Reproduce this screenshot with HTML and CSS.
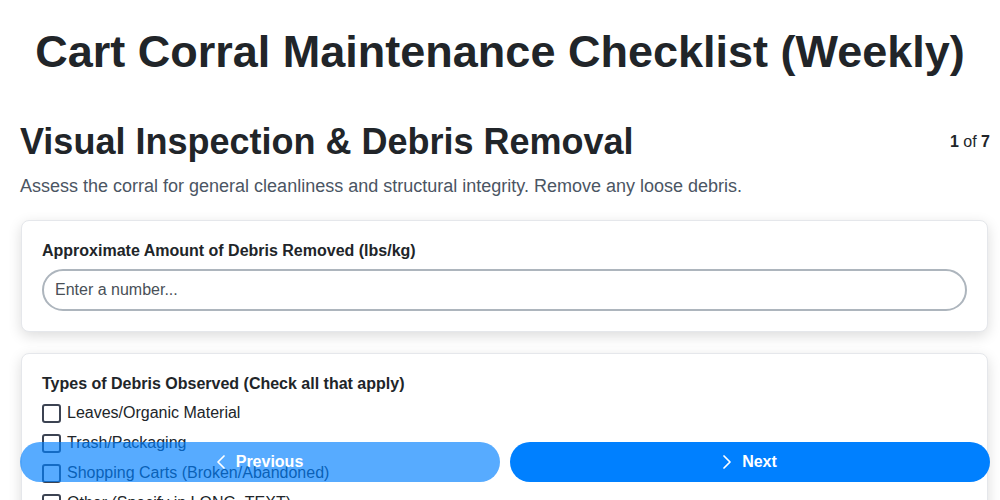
FILE: index.html
```html
<!DOCTYPE html>
<html lang="en">
<head>
  <meta charset="UTF-8">
  <title>Cart Corral Maintenance Checklist (Weekly)</title>
  <link rel="stylesheet" href="styles.css">
</head>
<body>

<h1 class="page-title">Cart Corral Maintenance Checklist (Weekly)</h1>

<div class="page">
  <div class="step-head">
    <h2>Visual Inspection &amp; Debris Removal</h2>
    <span class="step-count"><b>1</b> of <b>7</b></span>
  </div>
  <p class="step-desc">Assess the corral for general cleanliness and structural integrity. Remove any loose debris.</p>

  <!-- Question 1 -->
  <div class="card">
    <label class="q-label" for="debrisAmount">Approximate Amount of Debris Removed (lbs/kg)</label>
    <input type="number" id="debrisAmount" class="text-input" placeholder="Enter a number...">
  </div>

  <!-- Question 2 -->
  <div class="card">
    <div class="q-label tight">Types of Debris Observed (Check all that apply)</div>
    <label class="check-row"><input type="checkbox"><span>Leaves/Organic Material</span></label>
    <label class="check-row"><input type="checkbox"><span>Trash/Packaging</span></label>
    <label class="check-row"><input type="checkbox"><span>Shopping Carts (Broken/Abandoned)</span></label>
    <label class="check-row"><input type="checkbox"><span>Other (Specify in LONG_TEXT)</span></label>
  </div>
</div>

<div class="nav-bar">
  <button class="nav-btn prev" disabled>
    <svg width="8" height="14" viewBox="0 0 8 14" fill="none" stroke="currentColor" stroke-width="1.7" stroke-linecap="round" stroke-linejoin="round"><path d="M7 1 L1 7 L7 13"/></svg>
    Previous
  </button>
  <button class="nav-btn next">
    <svg width="8" height="14" viewBox="0 0 8 14" fill="none" stroke="currentColor" stroke-width="1.7" stroke-linecap="round" stroke-linejoin="round"><path d="M1 1 L7 7 L1 13"/></svg>
    Next
  </button>
</div>

</body>
</html>
```

FILE: styles.css
```css
:root {
  --text: #212529;
  --muted: #4b5563;
  --accent: #0080ff;
  --border: #e5e7eb;
}

html, body {
  overflow: hidden;
}

body {
  font-family: "Liberation Sans", Arial, sans-serif;
  color: var(--text);
  background: #fff;
  margin: 0;
}

.page-title {
  font-size: 45px;
  text-align: center;
  margin: 26px 0 0;
  line-height: 52px;
}

.page {
  padding: 0 10px 80px 20px;
}

.step-head {
  display: flex;
  justify-content: space-between;
  align-items: center;
  margin-top: 43px;
}

.step-head h2 {
  font-size: 36px;
  line-height: 42px;
  margin: 0;
}

.step-count {
  font-size: 16px;
  color: var(--text);
}

.step-desc {
  font-size: 18px;
  color: var(--muted);
  margin: 13px 0 24px;
  line-height: 20px;
}

.card {
  border: 1px solid var(--border);
  border-radius: 8px;
  padding: 20px;
  margin: 0 2px 21px 1px;
  background: #fff;
  box-shadow: 0 4px 14px rgba(0, 0, 0, 0.14);
  display: flex;
  flex-direction: column;
}

.q-label {
  font-size: 16px;
  font-weight: bold;
  line-height: 19px;
  margin-bottom: 9px;
}

.q-label.tight {
  margin-bottom: 5px;
}

.text-input {
  font-family: inherit;
  font-size: 16px;
  height: 42px;
  box-sizing: border-box;
  padding: 0 11px;
  border: 2px solid #adb5bd;
  border-radius: 999px;
  color: var(--text);
  outline: none;
}

.text-input::placeholder {
  color: #495057;
}

.check-row {
  display: flex;
  align-items: center;
  gap: 6px;
  font-size: 16px;
  height: 30px;
}

.check-row input {
  appearance: none;
  width: 19px;
  height: 19px;
  margin: 0;
  border: 2px solid #3c4352;
  border-radius: 3px;
  background: #fff;
}

.nav-bar {
  position: fixed;
  left: 20px;
  right: 10px;
  bottom: 18px;
  display: flex;
  gap: 10px;
}

.nav-btn {
  flex: 1;
  height: 40px;
  border: none;
  border-radius: 999px;
  background: var(--accent);
  color: #fff;
  font-family: inherit;
  font-size: 16px;
  font-weight: bold;
  display: flex;
  align-items: center;
  justify-content: center;
  gap: 11px;
  cursor: pointer;
}

.nav-btn.prev {
  opacity: 0.66;
  cursor: default;
}
```
